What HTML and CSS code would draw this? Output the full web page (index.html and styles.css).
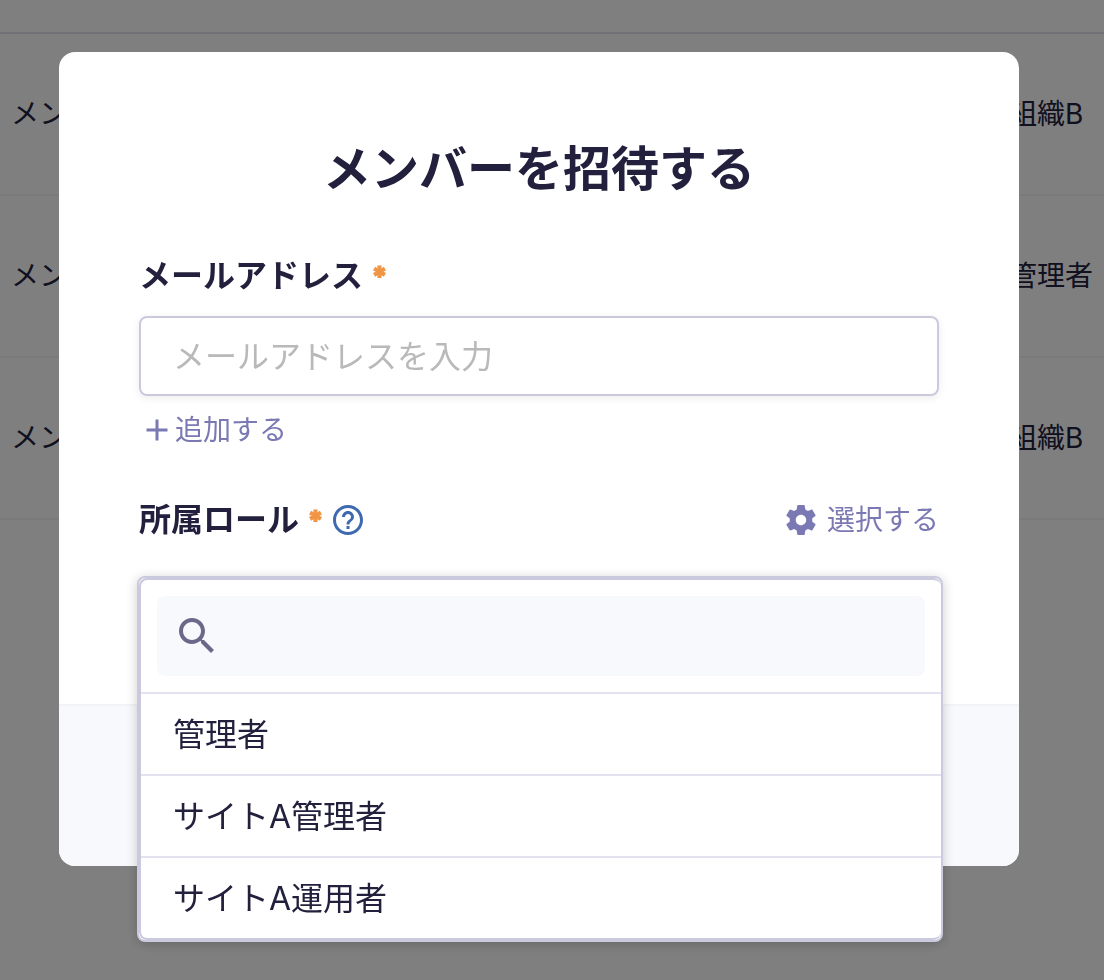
FILE: index.html
```html
<!DOCTYPE html>
<html lang="ja">
<head>
  <meta charset="UTF-8" />
  <meta name="viewport" content="width=device-width, initial-scale=1" />
  <title>メンバーを招待する</title>
  <link rel="stylesheet" href="styles.css">
</head>
<body>

  <!-- Member list -->
  <table class="members">
    <tbody>
      <tr><td>メンバー</td><td class="org">組織B</td></tr>
      <tr><td>メンバー</td><td class="org">管理者</td></tr>
      <tr><td>メンバー</td><td class="org">組織B</td></tr>
    </tbody>
  </table>

  <!-- Invite dialog -->
  <div class="overlay">
    <form class="modal" role="dialog" aria-modal="true" aria-labelledby="modalTitle">
      <div class="modal-body">
        <h1 class="modal-title" id="modalTitle">メンバーを招待する</h1>

        <label class="field-label" for="email">メールアドレス<span class="required">*</span></label>
        <input class="text-input" type="email" id="email" placeholder="メールアドレスを入力" required>
        <button class="link-button add-button" type="button">
          <svg class="icon" viewBox="0 0 24 24"><path d="M19 13h-6v6h-2v-6H5v-2h6V5h2v6h6v2z"/></svg>
          <span class="link-text">追加する</span>
        </button>

        <div class="role-row">
          <label class="field-label" for="roleSearch">所属ロール<span class="required">*</span></label>
          <button class="help-button" type="button" aria-label="ヘルプ">
            <svg class="icon" viewBox="0 0 24 24"><path d="M11 18h2v-2h-2v2zm1-16C6.48 2 2 6.48 2 12s4.48 10 10 10 10-4.48 10-10S17.52 2 12 2zm0 18c-4.41 0-8-3.59-8-8s3.59-8 8-8 8 3.59 8 8-3.59 8-8 8zm0-14c-2.21 0-4 1.79-4 4h2c0-1.1.9-2 2-2s2 .9 2 2c0 2-3 1.75-3 5h2c0-2.25 3-2.5 3-5 0-2.21-1.79-4-4-4z"/></svg>
          </button>
          <button class="link-button select-button" type="button">
            <svg class="icon" viewBox="0 0 24 24"><path d="M19.43 12.98c.04-.32.07-.64.07-.98s-.03-.66-.07-.98l2.11-1.65c.19-.15.24-.42.12-.64l-2-3.46c-.12-.22-.39-.3-.61-.22l-2.49 1c-.52-.4-1.08-.73-1.69-.98l-.38-2.65C14.46 2.18 14.25 2 14 2h-4c-.25 0-.46.18-.49.42l-.38 2.65c-.61.25-1.17.59-1.69.98l-2.49-1c-.23-.09-.49 0-.61.22l-2 3.46c-.13.22-.07.49.12.64l2.11 1.65c-.04.32-.07.65-.07.98s.03.66.07.98l-2.11 1.65c-.19.15-.24.42-.12.64l2 3.46c.12.22.39.3.61.22l2.49-1c.52.4 1.08.73 1.69.98l.38 2.65c.03.24.24.42.49.42h4c.25 0 .46-.18.49-.42l.38-2.65c.61-.25 1.17-.59 1.69-.98l2.49 1c.23.09.49 0 .61-.22l2-3.46c.12-.22.07-.49-.12-.64l-2.11-1.65zM12 15.5c-1.93 0-3.5-1.57-3.5-3.5s1.57-3.5 3.5-3.5 3.5 1.57 3.5 3.5-1.57 3.5-3.5 3.5z"/></svg>
            <span class="link-text">選択する</span>
          </button>
        </div>

        <div class="dropdown">
          <div class="dropdown-menu">
            <div class="dropdown-inner">
              <div class="search">
                <div class="search-box">
                  <svg class="search-icon" viewBox="0 0 24 24"><path d="M15.5 14h-.79l-.28-.27C15.41 12.59 16 11.11 16 9.5 16 5.91 13.09 3 9.5 3S3 5.91 3 9.5 5.91 16 9.5 16c1.61 0 3.09-.59 4.23-1.57l.27.28v.79l5 4.99L20.49 19l-4.99-5zm-6 0C7.01 14 5 11.99 5 9.5S7.01 5 9.5 5 14 7.01 14 9.5 11.99 14 9.5 14z"/></svg>
                  <input class="search-input" type="text" id="roleSearch">
                </div>
              </div>
              <button class="option" type="button">管理者</button>
              <button class="option" type="button">サイトA管理者</button>
              <button class="option" type="button">サイトA運用者</button>
            </div>
          </div>
        </div>
      </div>
      <div class="modal-footer"></div>
    </form>
  </div>

</body>
</html>
```

FILE: styles.css
```css
* {
  box-sizing: border-box;
}

body {
  margin: 0;
  min-height: 100vh;
  background: white;
  color: #22203c;
  font-family: Inter, "Noto Sans CJK JP", sans-serif;
  font-size: 28px;
}

button,
input {
  margin: 0;
  padding: 0;
  border: none;
  background: none;
  color: inherit;
  font: inherit;
}

button {
  cursor: pointer;
}

/* Member list */
.members {
  width: 100%;
  margin-top: 32px;
  border-top: 2px solid #e4e2f0;
  border-collapse: separate;
  border-spacing: 0;
}

.members td {
  height: 162px;
  padding: 0 11px 4px;
  border-bottom: 2px solid #f5f4f9;
  white-space: nowrap;
}

.members .org {
  width: 106px;
}

/* Dialog */
.overlay {
  position: fixed;
  inset: 0;
  padding: 52px 26px 0 0;
  background: rgba(0, 0, 0, 0.5);
}

.modal {
  max-width: 960px;
  margin: 0 auto;
  border-radius: 16px;
  background: white;
}

.modal-body {
  padding: 80px 80px 48px;
}

.modal-title {
  margin: 0 0 46px;
  font-size: 48px;
  line-height: 74px;
  text-align: center;
}

.field-label {
  display: block;
  font-size: 32px;
  font-weight: bold;
  line-height: 48px;
}

.required {
  margin-left: 8px;
  color: #f19544;
  font-family: Inter, sans-serif;
  font-size: 28px;
  font-weight: 900;
  line-height: 32px;
  -webkit-text-stroke: 1px #f19544;
}

.text-input {
  display: block;
  width: 100%;
  height: 80px;
  margin: 16px 0;
  padding: 0 32px;
  border: 2px solid #cbc9dd;
  border-radius: 8px;
  box-shadow: 0 2px 8px rgba(0, 0, 0, 0.08);
  font-size: 32px;
}

.text-input::placeholder {
  color: #b9b9b9;
}

.icon {
  width: 36px;
  height: 36px;
  fill: currentColor;
}

.link-button {
  display: flex;
  align-items: center;
  height: 36px;
  color: #7b79b3;
}

.link-text {
  padding-bottom: 4px;
}

.role-row {
  display: flex;
  align-items: center;
  margin: 48px 0 32px;
}

.help-button {
  height: 36px;
  margin-left: 6px;
  color: #3f6ab0;
}

.help-button .icon {
  display: block;
}

.select-button {
  gap: 8px;
  margin-left: auto;
}

/* Role dropdown */
.dropdown {
  position: relative;
  height: 80px;
}

.dropdown-menu {
  position: absolute;
  top: 0;
  left: -2px;
  right: -4px;
  border: 2px solid #cbc9dd;
  border-radius: 8px;
  background: white;
  box-shadow: 0 2px 12px rgba(0, 0, 0, 0.2);
}

.dropdown-inner {
  border: 2px solid #cbc9dd;
  border-right: none;
  border-radius: 8px;
}

.search {
  padding: 16px;
}

.search-box {
  display: flex;
  align-items: center;
  height: 80px;
  padding: 0 16px;
  border-radius: 8px;
  background: #f8f9fd;
}

.search-icon {
  width: 48px;
  height: 48px;
  fill: #6b6889;
}

.search-input {
  flex: 1;
  height: 48px;
  margin-left: 8px;
  outline: none;
}

.option {
  display: block;
  width: 100%;
  height: 82px;
  padding: 0 32px 4px;
  border-top: 2px solid #e4e2f0;
  font-size: 32px;
  text-align: left;
}

.modal-footer {
  height: 162px;
  border-top: 2px solid #f3f2f8;
  border-radius: 0 0 16px 16px;
  background: #f8f9fd;
}
```
